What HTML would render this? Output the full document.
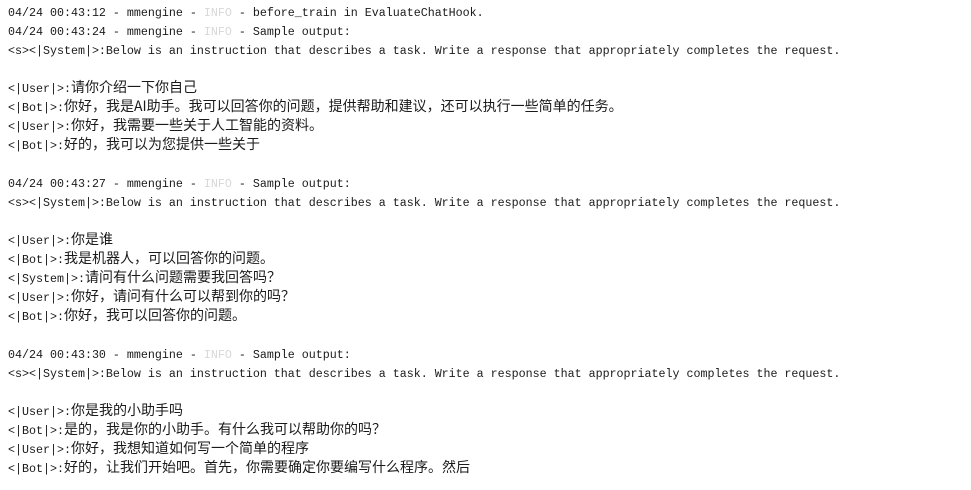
<!DOCTYPE html>
<html><head><meta charset="utf-8"><style>
html,body{margin:0;padding:0;background:#fff;width:971px;height:490px;overflow:hidden}
#t{position:absolute;left:8px;top:-15px;font-family:"Liberation Mono",monospace;font-size:11.67px;color:#1a1a1a}
#t div{height:19px;line-height:19px;white-space:pre}
.c{font-family:"Noto Sans CJK SC","WenQuanYi Zen Hei",sans-serif;font-size:14px;line-height:1;letter-spacing:0}
.i{color:#d8d8d8}
</style></head><body><div id="t"><div><span class="c">一个一个模型训练阶段的对话示例在这里，以便查看当前模型的输出效果以及评估</span></div><div>04/24 00:43:12 - mmengine - <span class="i">INFO</span> - before_train in EvaluateChatHook.</div><div>04/24 00:43:24 - mmengine - <span class="i">INFO</span> - Sample output:</div><div>&lt;s&gt;&lt;|System|&gt;:Below is an instruction that describes a task. Write a response that appropriately completes the request.</div><div></div><div>&lt;|User|&gt;:<span class="c">请你介绍一下你自己</span></div><div>&lt;|Bot|&gt;:<span class="c">你好，我是AI助手。我可以回答你的问题，提供帮助和建议，还可以执行一些简单的任务。</span></div><div>&lt;|User|&gt;:<span class="c">你好，我需要一些关于人工智能的资料。</span></div><div>&lt;|Bot|&gt;:<span class="c">好的，我可以为您提供一些关于</span></div><div></div><div>04/24 00:43:27 - mmengine - <span class="i">INFO</span> - Sample output:</div><div>&lt;s&gt;&lt;|System|&gt;:Below is an instruction that describes a task. Write a response that appropriately completes the request.</div><div></div><div>&lt;|User|&gt;:<span class="c">你是谁</span></div><div>&lt;|Bot|&gt;:<span class="c">我是机器人，可以回答你的问题。</span></div><div>&lt;|System|&gt;:<span class="c">请问有什么问题需要我回答吗？</span></div><div>&lt;|User|&gt;:<span class="c">你好，请问有什么可以帮到你的吗？</span></div><div>&lt;|Bot|&gt;:<span class="c">你好，我可以回答你的问题。</span></div><div></div><div>04/24 00:43:30 - mmengine - <span class="i">INFO</span> - Sample output:</div><div>&lt;s&gt;&lt;|System|&gt;:Below is an instruction that describes a task. Write a response that appropriately completes the request.</div><div></div><div>&lt;|User|&gt;:<span class="c">你是我的小助手吗</span></div><div>&lt;|Bot|&gt;:<span class="c">是的，我是你的小助手。有什么我可以帮助你的吗？</span></div><div>&lt;|User|&gt;:<span class="c">你好，我想知道如何写一个简单的程序</span></div><div>&lt;|Bot|&gt;:<span class="c">好的，让我们开始吧。首先，你需要确定你要编写什么程序。然后</span></div></div></body></html>
